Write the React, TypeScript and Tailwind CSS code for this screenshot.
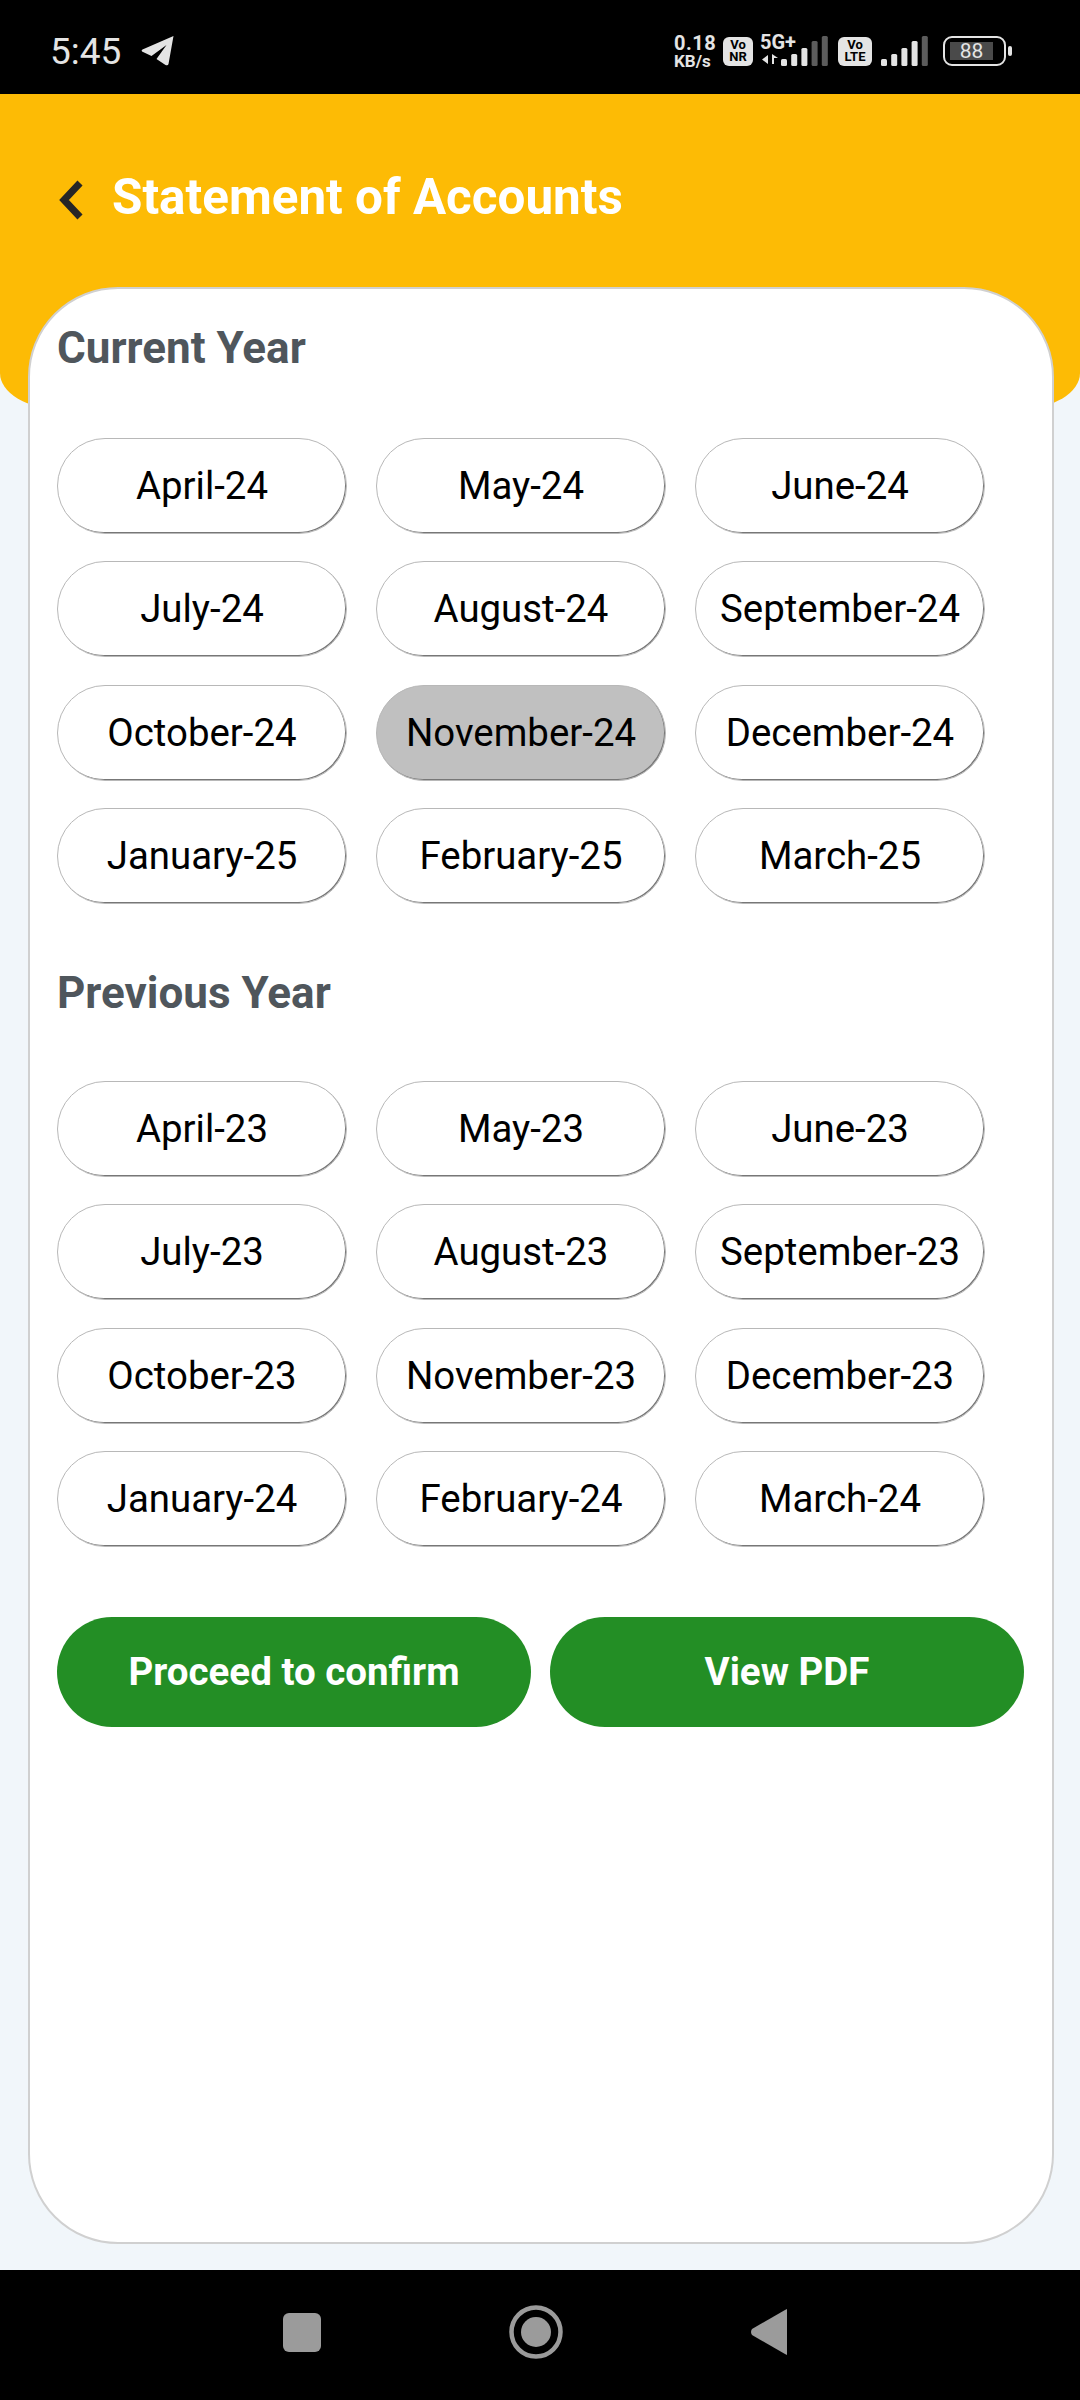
import React from "react"

const currentYear = [
  "April-24", "May-24", "June-24",
  "July-24", "August-24", "September-24",
  "October-24", "November-24", "December-24",
  "January-25", "February-25", "March-25",
]

const previousYear = [
  "April-23", "May-23", "June-23",
  "July-23", "August-23", "September-23",
  "October-23", "November-23", "December-23",
  "January-24", "February-24", "March-24",
]

function Bars({ dim }: { dim: number }) {
  const heights = [7, 12, 18, 25, 30]
  return (
    <svg width="47" height="30" viewBox="0 0 47 30">
      {heights.map((h, i) => (
        <rect
          key={i}
          x={i * 10.2}
          y={30 - h}
          width="6"
          height={h}
          rx="1.5"
          fill={i >= heights.length - dim ? "#5c5c5c" : "#e4e4e4"}
        />
      ))}
    </svg>
  )
}

function StatusBar() {
  return (
    <div className="h-[94px] bg-black flex items-center justify-between pt-[8px] pl-[50px] pr-[68px] shrink-0">
      <div className="flex items-center gap-[20px]">
        <span className="text-[37px] leading-none text-[#e4e4e4]">5:45</span>
        <svg width="33" height="30" viewBox="0 0 32 30">
          <path d="M32 0 L27 28 Q26.500 30 24 29 L15 23 L25 9 L10 20 L0.500 15.500 Q-0.500 14 1 13.500 Z" fill="#e4e4e4" />
        </svg>
      </div>
      <div className="flex items-center text-[#e4e4e4]">
        <div className="flex flex-col items-start w-[48px]">
          <span className="text-[20px] leading-[20px] font-bold tracking-[0.5px]">0.18</span>
          <span className="text-[17px] leading-[17px] font-bold">KB/s</span>
        </div>
        <div className="ml-[1px] w-[30px] h-[29px] rounded-[6px] bg-[#e4e4e4] text-black flex flex-col items-center justify-center text-[13px] leading-[12px] font-bold">
          <span>Vo</span>
          <span>NR</span>
        </div>
        <div className="ml-[7px] w-[68px] h-[30px] relative">
          <span className="absolute left-0 top-[-3px] text-[20px] leading-[18px] font-bold">5G+</span>
          <svg className="absolute left-[2px] bottom-[1px]" width="16" height="11" viewBox="0 0 16 11">
            <path d="M6 1 V10 L0 5.500 Z M10 10 V0 L16 4 H12 V10 Z" fill="#e4e4e4" />
          </svg>
          <div className="absolute right-0 bottom-0 flex">
            <Bars dim={2} />
          </div>
        </div>
        <div className="ml-[10px] w-[34px] h-[29px] rounded-[6px] bg-[#e4e4e4] text-black flex flex-col items-center justify-center text-[13px] leading-[12px] font-bold">
          <span>Vo</span>
          <span>LTE</span>
        </div>
        <div className="ml-[9px] flex">
          <Bars dim={1} />
        </div>
        <div className="ml-[15px] flex items-center gap-[2px]">
          <div className="w-[63px] h-[30px] rounded-[9px] border-[2px] border-[#e4e4e4] flex items-center pl-[5px]">
            <div className="w-[43px] h-[18px] bg-[#4a4a4a] flex items-center justify-center text-[21px] leading-none text-[#e4e4e4]">
              88
            </div>
          </div>
          <div className="w-[4px] h-[10px] rounded-[2px] bg-[#e4e4e4]" />
        </div>
      </div>
    </div>
  )
}

function MonthPill({ label, active }: { label: string; active?: boolean }) {
  return (
    <div
      className={`h-[96px] rounded-full border-[1.5px] border-[#b8b8b8] shadow-[inset_-1px_-1px_0_0_#777777] flex items-center justify-center text-[38.4px] text-black ${
        active ? "bg-[#c0c0c0]" : "bg-white"
      }`}
    >
      {label}
    </div>
  )
}

function MonthGrid({ months }: { months: string[] }) {
  return (
    <div className="grid grid-cols-[290px_290px_290px] gap-x-[29px] gap-y-[27.5px]">
      {months.map((m) => (
        <MonthPill key={m} label={m} active={m === "November-24"} />
      ))}
    </div>
  )
}

function NavBar() {
  return (
    <div className="h-[130px] bg-black flex items-center justify-center shrink-0 pb-[6px]">
      <div className="flex items-center gap-[188px] pr-[11px]">
        <div className="w-[38px] h-[39px] rounded-[6px] bg-[#9b9b9b]" />
        <svg width="54" height="54" viewBox="0 0 54 54">
          <circle cx="27" cy="27" r="24.500" fill="none" stroke="#9b9b9b" strokeWidth="4.500" />
          <circle cx="27" cy="27" r="15" fill="#9b9b9b" />
        </svg>
        <svg width="36" height="46" viewBox="0 0 36 46">
          <path d="M36 0 V46 L34 45 L1 26 Q-1 23 1 20 L34 1 Z" fill="#9b9b9b" />
        </svg>
      </div>
    </div>
  )
}

export default function App() {
  return (
    <div className="w-[1080px] h-[2400px] flex flex-col bg-[#f1f6fa] font-['Roboto',sans-serif] overflow-hidden">
      <StatusBar />

      <header className="h-[315px] bg-[#fdbb05] rounded-b-[60px_36px] shrink-0 flex items-start pl-[59px] pt-[75px] gap-[29px]">
        <svg width="24" height="40" viewBox="0 0 24 40" className="mt-[11px]">
          <path d="M21 3 L5 20 L21 37" fill="none" stroke="#262626" strokeWidth="7" />
        </svg>
        <h1 className="text-[49.4px] leading-[56px] font-bold text-white">Statement of Accounts</h1>
      </header>

      <main className="mt-[-122px] ml-[28px] w-[1026px] h-[1957px] bg-white rounded-[90px] border-[2px] border-[#d0d0d0] pl-[27px] pt-[31px] shrink-0">
        <h2 className="text-[44px] leading-[56px] font-bold text-[#4f565c] mb-[61.5px]">Current Year</h2>
        <MonthGrid months={currentYear} />

        <h2 className="mt-[60.5px] text-[44px] leading-[56px] font-bold text-[#4f565c] mb-[60px]">Previous Year</h2>
        <MonthGrid months={previousYear} />

        <div className="mt-[70px] flex gap-[19px]">
          <button className="w-[474px] h-[110px] rounded-full bg-[#238e25] text-white text-[38.5px] font-bold">
            Proceed to confirm
          </button>
          <button className="w-[474px] h-[110px] rounded-full bg-[#238e25] text-white text-[38.5px] font-bold">
            View PDF
          </button>
        </div>
      </main>

      <div className="flex-1" />
      <NavBar />
    </div>
  )
}
